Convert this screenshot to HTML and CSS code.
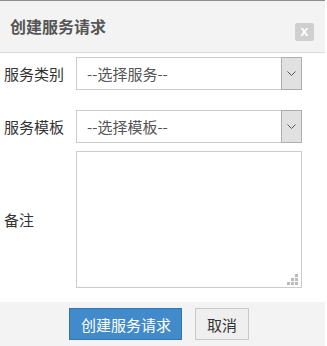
FILE: index.html
```html
<!DOCTYPE html>
<html><head>
<meta charset="UTF-8">
<link rel="stylesheet" href="styles.css">
<title>创建服务请求</title>
</head>
<body>
<div class="dialog">
 <div class="dialog-head">
  <h1>创建服务请求</h1>
  <span class="close">x</span>
 </div>
 <form class="dialog-body">
  <div class="row row-service">
   <label>服务类别</label>
   <div class="select">
    <select><option>--选择服务--</option></select>
    <span class="arrow"><svg width="9" height="5" viewBox="0 0 9 5"><path d="M0.5 0.5 L4.5 4.5 L8.5 0.5" fill="none" stroke="#555" stroke-width="1"/></svg></span>
   </div>
  </div>
  <div class="row row-template">
   <label>服务模板</label>
   <div class="select">
    <select><option>--选择模板--</option></select>
    <span class="arrow"><svg width="9" height="5" viewBox="0 0 9 5"><path d="M0.5 0.5 L4.5 4.5 L8.5 0.5" fill="none" stroke="#555" stroke-width="1"/></svg></span>
   </div>
  </div>
  <div class="row row-note">
   <label>备注</label>
   <div class="note">
    <textarea></textarea>
    <svg class="grip" width="11" height="11" viewBox="0 0 11 11" fill="#bbb">
     <rect x="8" y="0" width="3" height="3"/>
     <rect x="4" y="4" width="3" height="3"/><rect x="8" y="4" width="3" height="3"/>
     <rect x="0" y="8" width="3" height="3"/><rect x="4" y="8" width="3" height="3"/><rect x="8" y="8" width="3" height="3"/>
    </svg>
   </div>
  </div>
 </form>
 <div class="dialog-foot">
  <button class="btn btn-primary">创建服务请求</button>
  <button class="btn">取消</button>
 </div>
</div>
</body></html>
```

FILE: styles.css
```css
html, body {
  margin: 0;
  background: #fff;
}
body {
  font-family: "Microsoft YaHei", "Noto Sans CJK SC", sans-serif;
  font-size: 15px;
  color: #333;
}
.dialog {
  width: 325px;
  border-top: 1px solid #8c8c8c;
}
/* head */
.dialog-head {
  display: flex;
  align-items: center;
  justify-content: space-between;
  height: 51px;
  padding: 0 11px 0 10px;
  background: #f3f3f3;
  border-bottom: 1px solid #dcdcdc;
}
.dialog-head h1 {
  margin: 0;
  font-size: 16px;
  font-weight: bold;
  color: #555;
  line-height: 1;
  padding-bottom: 2px;
}
.close {
  width: 19px;
  height: 18px;
  margin-top: 10px;
  border-radius: 2px;
  background: #cfcfcf;
  color: #fff;
  font-family: "Liberation Sans", sans-serif;
  font-weight: bold;
  font-size: 14px;
  line-height: 17px;
  text-align: center;
}
/* body */
.dialog-body {
  margin: 0;
  padding: 4px 23px 0 0;
}
.row {
  display: flex;
  align-items: center;
}
.row label {
  width: 72px;
  padding-left: 4px;
  line-height: 1;
}
.row-template {
  margin-top: 20px;
}
.row-note {
  margin-top: 8px;
}
.select {
  display: flex;
  flex: 1;
  height: 31px;
  border: 1px solid #ccc;
  background: #fff;
}
.select select {
  flex: 1;
  appearance: none;
  -webkit-appearance: none;
  border: 0;
  outline: 0;
  background: transparent;
  padding: 0 0 0 10px;
  font: inherit;
  font-size: 15px;
  color: #555;
}
.select .arrow {
  display: flex;
  align-items: center;
  justify-content: center;
  width: 19px;
  margin: -1px -1px -1px 0;
  border: 1px solid #adadad;
  background: #e1e1e1;
}
.note {
  position: relative;
  flex: 1;
  display: flex;
}
.note textarea {
  flex: 1;
  box-sizing: border-box;
  height: 137px;
  margin: 0;
  padding: 2px;
  border: 1px solid #ccc;
  resize: none;
  outline: 0;
  font: inherit;
}
.grip {
  position: absolute;
  right: 4px;
  bottom: 3px;
}
/* foot */
.dialog-foot {
  display: flex;
  gap: 13px;
  margin-top: 14px;
  padding: 6px 0 6px 69px;
  height: 32px;
  background: #f3f3f3;
}
.btn {
  height: 32px;
  padding: 0 11px;
  border: 1px solid #c9c9c9;
  border-radius: 0;
  background: #efefef;
  color: #333;
  font: inherit;
  font-size: 15px;
}
.btn-primary {
  padding: 0 10px 0 11px;
  border-color: #3276b1;
  background: #428bca;
  color: #fff;
}
```
